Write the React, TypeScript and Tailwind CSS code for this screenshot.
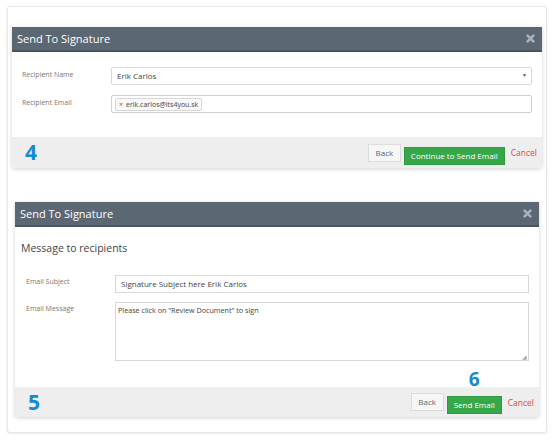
const font = { fontFamily: '"Open Sans", "Liberation Sans", sans-serif' };

function CloseIcon() {
  return (
    <svg width="9" height="9" viewBox="0 0 10 10" className="shrink-0">
      <path d="M1.8 1.8 L8.2 8.2 M8.2 1.8 L1.8 8.2" stroke="#aab3ba" strokeWidth="2.8" strokeLinecap="round" />
    </svg>
  );
}

function Header() {
  return (
    <div className="h-[25px] bg-[#5b6874] border-b-2 border-[#48545e] flex items-center justify-between pl-[5px] pr-[7px]">
      <span className="text-[11px] text-white leading-none">Send To Signature</span>
      <CloseIcon />
    </div>
  );
}

function Footer({ step, primary, badge, tall }: { step: string; primary: string; badge?: string; tall?: boolean }) {
  return (
    <div className={`${tall ? 'h-[31px]' : 'h-[30px]'} bg-[#eeeeee] flex items-center justify-between pl-[13px] pr-[5px]`}>
      <span className="text-[21px] font-bold text-[#1689d3] leading-none">{step}</span>
      <div className="flex items-center gap-[3px]">
        <button className="h-[18px] w-[33px] bg-[#f6f6f6] border border-[#dcdcdc] text-[8px] text-[#666] leading-none">Back</button>
        <div className="relative">
          {badge && (
            <span className="absolute left-1/2 -translate-x-1/2 -top-[21px] bg-white rounded-full w-[20px] h-[20px] flex items-center justify-center text-[19px] font-bold text-[#1689d3] leading-none">
              {badge}
            </span>
          )}
          <button className="h-[18px] px-[6px] bg-[#36a84a] border border-[#2f9a41] text-[8px] text-white leading-none">{primary}</button>
        </div>
        <span className="ml-[3px] mt-[2px] text-[8.5px] text-[#f0414f] leading-none">Cancel</span>
      </div>
    </div>
  );
}

export default function App() {
  return (
    <div className="w-[553px] h-[439px] bg-white pt-[6px] pl-[7px]" style={font}>
      <div className="w-[540px] h-[427px] bg-white border border-[#e6e6e6] rounded-[3px] shadow-[0_1px_3px_rgba(0,0,0,0.08)] pt-[20px]">
        {/* Step 4 */}
        <div className="ml-[4px] w-[530px] bg-white shadow-[0_1px_4px_rgba(0,0,0,0.18)] rounded-b-[3px] overflow-hidden">
          <Header />
          <div className="h-[85px] pt-[15px] px-[10px] flex flex-col gap-[10px]">
            <div className="flex">
              <span className="w-[89px] pt-[3px] text-[7px] text-[#777]">Recipient Name</span>
              <div className="flex-1 h-[18px] border border-[#d8d8d8] rounded-[2px] flex items-center justify-between pl-[5px] pr-[4px]">
                <span className="text-[8px] text-[#444]">Erik Carlos</span>
                <span className="text-[5px] text-[#555]">▼</span>
              </div>
            </div>
            <div className="flex">
              <span className="w-[89px] pt-[3px] text-[7px] text-[#777]">Recipient Email</span>
              <div className="flex-1 h-[18px] border border-[#d0d0d0] rounded-[2px] flex items-center pl-[3px]">
                <span className="h-[13px] px-[3px] border border-[#d6d6d6] rounded-[2px] bg-[#f9f9f9] flex items-center gap-[3px] text-[7px] text-[#444] leading-none">
                  <span className="text-[#666]">×</span>erik.carlos@its4you.sk
                </span>
              </div>
            </div>
          </div>
          <Footer step="4" primary="Continue to Send Email" tall />
        </div>

        {/* Step 5 */}
        <div className="mt-[34px] ml-[7px] w-[524px] bg-white shadow-[0_1px_4px_rgba(0,0,0,0.18)] rounded-b-[3px]">
          <Header />
          <div className="h-[160px] px-[10px] pt-[14px]">
            <div className="-ml-[4px] text-[10.5px] text-[#444]">Message to recipients</div>
            <div className="mt-[18px] flex flex-col gap-[9px] pl-[1px]">
              <div className="flex">
                <span className="w-[89px] pt-[2px] text-[7px] text-[#777]">Email Subject</span>
                <div className="flex-1 h-[18px] border border-[#d8d8d8] flex items-center pl-[5px] text-[8px] text-[#444]">
                  Signature Subject here Erik Carlos
                </div>
              </div>
              <div className="flex">
                <span className="w-[89px] pt-[2px] text-[7px] text-[#777]">Email Message</span>
                <div className="relative flex-1 h-[59px] border border-[#d8d8d8] pl-[2px] pt-[2px] text-[7.2px] text-[#444]">
                  Please click on "Review Document" to sign
                  <span className="absolute right-[1px] bottom-0 text-[6px] text-[#aaa] leading-none">◢</span>
                </div>
              </div>
            </div>
          </div>
          <Footer step="5" primary="Send Email" badge="6" />
        </div>
      </div>
    </div>
  );
}
